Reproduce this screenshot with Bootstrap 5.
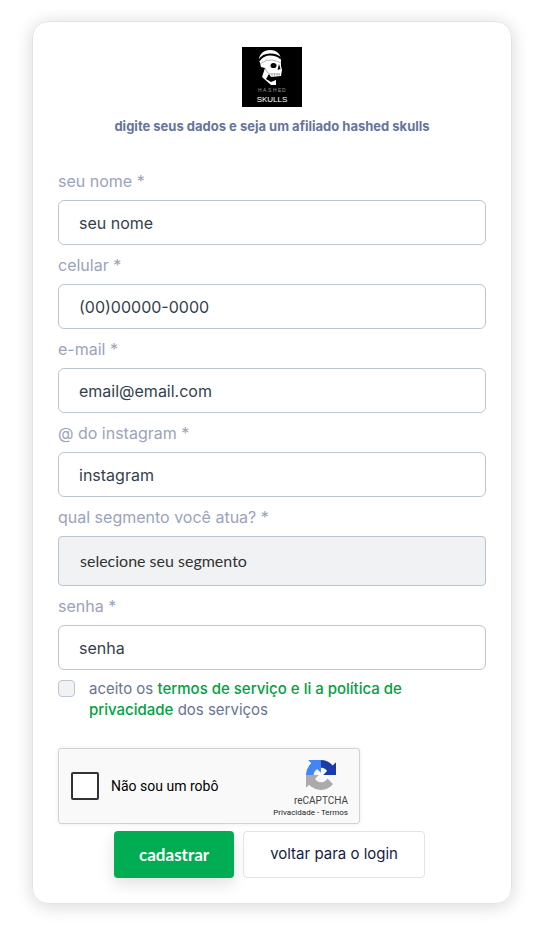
<!DOCTYPE html>
<html lang="pt-BR">
<head>
<meta charset="utf-8">
<meta name="viewport" content="width=device-width, initial-scale=1">
<title>Cadastro de afiliado</title>
<link href="https://cdn.jsdelivr.net/npm/bootstrap@5.3.0/dist/css/bootstrap.min.css" rel="stylesheet">
<style>
body { font-family: Inter, "Liberation Sans", sans-serif; font-size: 16px; background: #fff; color: #687494; }
.signup { margin: 21px 33px 26px 32px; padding: 25px; border: 1px solid #dfe4ec; border-radius: 16px; box-shadow: 0 2px 18px rgba(0,0,0,.16); }
.brand { width: 60px; height: 60px; }
.headline { font-size: 13px; line-height: 20px; font-weight: 700; color: #65749a; margin: 9px 0 33px; }
.field { margin-bottom: 8px; }
.field .form-label { display: block; line-height: 24px; margin-bottom: 7px; color: #9ba3ba; }
.field .form-control { height: 45px; padding: 0 20px; font-size: 16px; border-color: #bcc5d0; border-radius: 6px; color: #333f4c; }
.field .form-control::placeholder { color: #333f4c; opacity: 1; }
.field .form-select { height: 50px; padding: 0 21px; font-family: Lato, sans-serif; font-size: 16px; border-color: #b8c4d0; border-radius: 4px; color: #333; background: #f0f2f4; }
.terms { gap: 14px; margin: 0 0 28px; line-height: 21px; font-size: 15px; }
.terms .form-check-input { width: 17px; height: 17px; margin: 2px 0 0; background-color: #f0f2f4; border-color: #bcc5d0; border-radius: 4px; }
.terms .form-check-label { max-width: 350px; }
.terms a { color: #00a13f; font-weight: 500; text-decoration: none; }
.captcha { width: 302px; max-width: 100%; height: 76px; padding: 0 11px 0 12px; background: #f9f9f9; border: 1px solid #d3d3d3; border-radius: 3px; box-shadow: 0 0 4px rgba(0,0,0,.08); font-family: Roboto, sans-serif; color: #000; }
.captcha .form-check-input { width: 28px; height: 28px; margin: 0; border: 2px solid #333; border-radius: 2px; background-color: #fff; }
.captcha label { font-size: 14px; margin-left: 12px; }
.captcha-brand { line-height: 12px; font-size: 10px; color: #444; padding-top: 6px; }
.captcha-brand svg { width: 30px; height: 30px; margin: 0 12px 5px 0; }
.captcha-brand .legal { font-size: 8px; color: #222; white-space: nowrap; }
.captcha-brand a { color: inherit; text-decoration: none; }
.actions { gap: 9px; margin-top: 7px; padding-right: 5px; }
.actions .btn { height: 47px; border-radius: 4px; padding: 0 26px; }
.actions .btn-join { background: #00ad52; color: #fff; font-family: Lato, sans-serif; font-weight: 700; font-size: 17px; padding: 0 24px; box-shadow: 0 6px 16px rgba(0,0,0,.12); }
.actions .btn-back { display: flex; align-items: center; border-color: #dfe4ec; color: #161c42; font-size: 15px; }
</style>
<script src="https://cdn.jsdelivr.net/npm/bootstrap@5.3.0/dist/js/bootstrap.bundle.min.js"></script>
</head>
<body>
<main class="signup">
  <form>
    <div class="text-center">
      <svg class="brand d-block mx-auto" viewBox="0 0 60 60" role="img" aria-label="Hashed Skulls">
        <rect width="60" height="60" fill="#000"/>
        <path d="M17 13C17 7 22 3 28 3c7 0 11 4 11 11v5l1 4-1 6-10 1-2-3-3 5 5 3 5-2v5h-5L20 30l3-9-4-1-1-4z" fill="#fff"/>
        <path d="M17 13.500q4-6 11-6 7 0 11 4" fill="none" stroke="#000" stroke-width="2"/>
        <path d="M18 17q6-5 12-4 6 1 9 3M23 21l2 4 3 2M28 27h10M30 26v4M32.500 26v4M35 26v4M37 26v3" fill="none" stroke="#888" stroke-width=".6"/>
        <ellipse cx="31.500" cy="18.500" rx="3" ry="2.600" fill="#000"/>
        <path d="M37 17l1.500 5-3 1z" fill="#000"/>
        <text y="45" x="16 21 26 31 36 40" font-family="Liberation Sans, sans-serif" font-size="5" fill="#999">HASHED</text>
        <text x="30" y="55" text-anchor="middle" font-family="Liberation Sans, sans-serif" font-size="8" fill="#fff">SKULLS</text>
      </svg>
      <h1 class="headline">digite seus dados e seja um afiliado hashed skulls</h1>
    </div>
    <div class="field"><label class="form-label" for="nome">seu nome *</label><input class="form-control" id="nome" type="text" placeholder="seu nome"></div>
    <div class="field"><label class="form-label" for="celular">celular *</label><input class="form-control" id="celular" type="tel" placeholder="(00)00000-0000"></div>
    <div class="field"><label class="form-label" for="email">e-mail *</label><input class="form-control" id="email" type="email" placeholder="email@email.com"></div>
    <div class="field"><label class="form-label" for="instagram">@ do instagram *</label><input class="form-control" id="instagram" type="text" placeholder="instagram"></div>
    <div class="field"><label class="form-label" for="segmento">qual segmento você atua? *</label><select class="form-select" id="segmento"><option>selecione seu segmento</option></select></div>
    <div class="field"><label class="form-label" for="senha">senha *</label><input class="form-control" id="senha" type="password" placeholder="senha"></div>
    <div class="terms d-flex align-items-start">
      <input class="form-check-input flex-shrink-0" type="checkbox" id="aceito">
      <label class="form-check-label" for="aceito">aceito os <a href="#termos">termos de serviço e li a política de privacidade</a> dos serviços</label>
    </div>
    <div class="captcha d-flex align-items-center">
      <input class="form-check-input flex-shrink-0" type="checkbox" id="robo">
      <label for="robo">Não sou um robô</label>
      <div class="captcha-brand ms-auto text-end">
        <svg viewBox="0 0 64 64" aria-hidden="true">
          <path d="M64 31.955l-.033-1.370V4.687l-7.160 7.160C50.948 4.674 42.033.093 32.050.093c-10.400 0-19.622 4.960-25.458 12.640l11.736 11.860a15.550 15.550 0 0 1 4.754-5.334c2.050-1.600 4.952-2.906 8.968-2.906.485 0 .860.057 1.135.163 4.976.393 9.288 3.140 11.828 7.124l-8.307 8.307L64 31.953" fill="#1c3aa9"/>
          <path d="M31.862.094l-1.370.033H4.594l7.160 7.160C4.580 13.147 0 22.060 0 32.046c0 10.400 4.960 19.622 12.640 25.458L24.500 45.768a15.550 15.550 0 0 1-5.334-4.754c-1.600-2.050-2.906-4.952-2.906-8.968 0-.485.057-.860.163-1.135.393-4.976 3.140-9.288 7.124-11.828l8.307 8.307L31.860.095" fill="#4285f4"/>
          <path d="M.001 32.045l.033 1.370v25.898l7.160-7.160c5.860 7.173 14.774 11.754 24.760 11.754 10.400 0 19.622-4.960 25.458-12.640l-11.736-11.860a15.550 15.550 0 0 1-4.754 5.334c-2.050 1.600-4.952 2.906-8.968 2.906-.485 0-.860-.057-1.135-.163-4.976-.393-9.288-3.140-11.828-7.124l8.307-8.307c-10.522.040-22.400.066-27.295-.005" fill="#ababab"/>
        </svg>
        <div>reCAPTCHA</div>
        <div class="legal"><a href="#privacidade">Privacidade</a> - <a href="#uso">Termos</a></div>
      </div>
    </div>
    <div class="actions d-flex flex-wrap justify-content-center">
      <button class="btn btn-join" type="submit">cadastrar</button>
      <a class="btn btn-back" href="#login">voltar para o login</a>
    </div>
  </form>
</main>
</body>
</html>
